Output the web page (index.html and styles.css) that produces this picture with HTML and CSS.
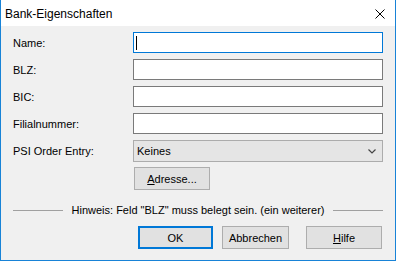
FILE: index.html
```html
<!DOCTYPE html>
<html>
  <head>
    <meta charset="utf-8" />
    <title>Bank-Eigenschaften</title>
    <link rel="stylesheet" href="styles.css">
  </head>

  <body>
    <div class="window">
      <!-- title bar -->
      <div class="titlebar">
        <span class="title">Bank-Eigenschaften</span>
        <svg class="close" width="10" height="10" viewBox="0 0 10 10">
          <path d="M0.5 0.5 L9.5 9.5 M9.5 0.5 L0.5 9.5" stroke="#000" stroke-width="1" fill="none" />
        </svg>
      </div>

      <div class="content">
        <!-- fields -->
        <div class="form">
          <label>Name:</label>
          <div class="field focused"><span class="caret"></span></div>

          <label>BLZ:</label>
          <div class="field"></div>

          <label>BIC:</label>
          <div class="field"></div>

          <label>Filialnummer:</label>
          <div class="field"></div>

          <label>PSI Order Entry:</label>
          <div class="combo">
            <span>Keines</span>
            <svg class="chevron" width="8" height="5" viewBox="0 0 8 5">
              <path d="M0.5 0.5 L4 4 L7.5 0.5" stroke="#444" stroke-width="1.2" fill="none" />
            </svg>
          </div>

          <span></span>
          <div class="adresse-row">
            <button class="btn adresse"><u>A</u>dresse...</button>
          </div>
        </div>

        <!-- hint -->
        <div class="hint">
          <span class="line"></span>
          <span class="hint-text">Hinweis: Feld "BLZ" muss belegt sein. (ein weiterer)</span>
          <span class="line"></span>
        </div>

        <!-- buttons -->
        <div class="buttons">
          <button class="btn ok">OK</button>
          <button class="btn cancel">Abbrechen</button>
          <button class="btn help"><u>H</u>ilfe</button>
        </div>
      </div>
    </div>
  </body>
</html>
```

FILE: styles.css
```css
body {
  margin: 0;
  padding: 0;
  font-family: "Liberation Sans", Arial, sans-serif;
  font-size: 11px;
  color: #000;
  background: #f0f0f0;
}

.window {
  width: 396px;
  height: 261px;
  box-sizing: border-box;
  border: 1px solid #1883d7;
  border-top: none;
  background: #f0f0f0;
  display: flex;
  flex-direction: column;
}

.titlebar {
  height: 26px;
  background: #ffffff;
  display: flex;
  align-items: center;
  justify-content: space-between;
  padding: 0 10px 0 4px;
}

.title {
  font-size: 12px;
  margin-top: 1px;
}

.close {
  display: block;
  margin-top: 1px;
}

.content {
  padding: 6px 12px 0 12px;
}

.form {
  display: grid;
  grid-template-columns: 120px 250px;
  grid-auto-rows: 21px;
  row-gap: 6px;
  align-items: center;
}

.form label {
  padding-top: 1px;
}

.field {
  height: 21px;
  box-sizing: border-box;
  background: #ffffff;
  border: 1px solid #7a7a7a;
  display: flex;
  align-items: center;
  padding-left: 2px;
}

.field.focused {
  border-color: #0078d7;
}

.caret {
  width: 1px;
  height: 14px;
  background: #000;
}

.combo {
  height: 22px;
  box-sizing: border-box;
  background: #e5e5e5;
  border: 1px solid #acacac;
  display: flex;
  align-items: center;
  justify-content: space-between;
  padding: 0 6px 0 3px;
}

.chevron {
  display: block;
  margin-top: 1px;
}

.adresse-row {
  align-self: start;
  padding-left: 1px;
}

.btn {
  font-family: "Liberation Sans", Arial, sans-serif;
  font-size: 11px;
  color: #000;
  background: #e1e1e1;
  border: 1px solid #adadad;
  height: 23px;
  padding: 0;
  margin: 0;
  box-sizing: border-box;
}

.btn u {
  text-decoration-thickness: 1px;
}

.adresse {
  width: 76px;
}

.hint {
  display: flex;
  align-items: center;
  margin-top: 15px;
  height: 14px;
}

.line {
  flex: 1;
  height: 1px;
  background: #a0a0a0;
}

.hint-text {
  margin: 0 9px;
}

.buttons {
  display: flex;
  justify-content: flex-end;
  margin-top: 9px;
  padding-right: 1px;
}

.ok {
  width: 75px;
  border: 2px solid #0078d7;
}

.cancel {
  width: 67px;
  margin-left: 9px;
}

.help {
  width: 76px;
  margin-left: 17px;
}
```
